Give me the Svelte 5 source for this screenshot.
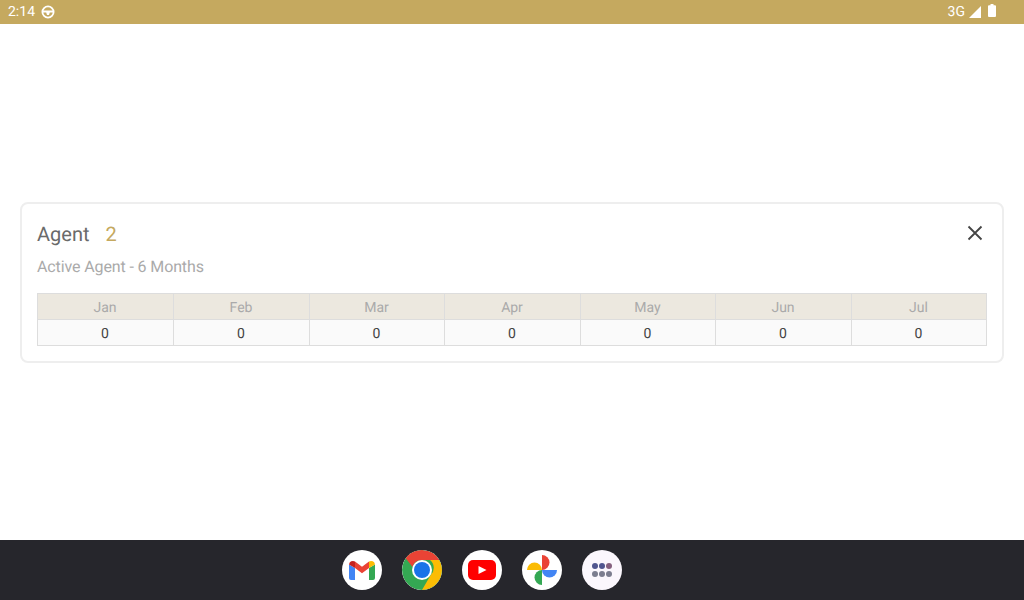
<script>
  const months = ['Jan', 'Feb', 'Mar', 'Apr', 'May', 'Jun', 'Jul'];
</script>

<div class="screen">
  <header class="status">
    <div class="left">
      <span>2:14</span>
      <svg width="14" height="14" viewBox="0 0 14 14">
        <circle cx="7" cy="7" r="5.6" fill="none" stroke="#fff" stroke-width="1.800" />
        <path d="M2 5.500h10v2H8.800L8 10H6L5.200 7.500H2z" fill="#fff" />
      </svg>
    </div>
    <div class="right">
      <span>3G</span>
      <svg width="12" height="12" viewBox="0 0 12 12"><path d="M12 0v12H0z" fill="#fff" /></svg>
      <svg class="batt" width="8" height="13" viewBox="0 0 8 13"><path d="M2.500 0h3v1.200H7a1 1 0 0 1 1 1V12a1 1 0 0 1-1 1H1a1 1 0 0 1-1-1V2.200a1 1 0 0 1 1-1h1.500z" fill="#fff" /></svg>
    </div>
  </header>

  <main class="main">
    <section class="card">
      <div class="head">
        <h1>Agent<span class="count">2</span></h1>
        <button class="close" aria-label="Close">
          <svg width="16" height="16" viewBox="0 0 16 16"><path d="M1.500 1.500l13 13M14.500 1.500l-13 13" stroke="#444" stroke-width="1.800" fill="none" /></svg>
        </button>
      </div>
      <p class="sub">Active Agent - 6 Months</p>
      <div class="table">
        {#each months as m}
          <div class="th">{m}</div>
        {/each}
        {#each months as m}
          <div class="td">0</div>
        {/each}
      </div>
    </section>
  </main>

  <nav class="dock">
    <div class="app">
      <svg width="28" height="22" viewBox="0 0 28 22">
        <path d="M1 5.500V19a2 2 0 0 0 2 2h4V9z" fill="#4285f4" />
        <path d="M21 9v12h4a2 2 0 0 0 2-2V5.500z" fill="#34a853" />
        <path d="M7 9l7 5.300L21 9V2.500l-7 5.300-7-5.300z" fill="#ea4335" />
        <path d="M1 5.500a4 4 0 0 1 6-3V9L1 5.500z" fill="#c5221f" />
        <path d="M21 2.500a4 4 0 0 1 6 3L21 9z" fill="#fbbc04" />
      </svg>
    </div>
    <div class="app">
      <svg width="40" height="40" viewBox="0 0 40 40">
        <circle cx="20" cy="20" r="20" fill="#34a853" />
        <path d="M20 0a20 20 0 0 1 17.320 10H20a10 10 0 0 0-9.500 7L3.500 8A20 20 0 0 1 20 0z" fill="#ea4335" />
        <path d="M37.320 10A20 20 0 0 1 20 40l8.700-15a10 10 0 0 0-.7-15z" fill="#fbbc04" />
        <circle cx="20" cy="20" r="10" fill="#fff" />
        <circle cx="20" cy="20" r="8" fill="#1a73e8" />
      </svg>
    </div>
    <div class="app">
      <svg width="28" height="20" viewBox="0 0 28 20">
        <rect width="28" height="20" rx="5" fill="#f00" />
        <path d="M10.500 6v8l8-4z" fill="#fff" />
      </svg>
    </div>
    <div class="app">
      <svg width="30" height="30" viewBox="0 0 30 30">
        <path d="M15 15V0a7.500 7.500 0 0 1 0 15z" fill="#ea4335" />
        <path d="M15 15h15a7.500 7.500 0 0 1-15 0z" fill="#4285f4" />
        <path d="M15 15v15a7.500 7.500 0 0 1 0-15z" fill="#34a853" />
        <path d="M15 15H0a7.500 7.500 0 0 1 15 0z" fill="#fbbc04" />
      </svg>
    </div>
    <div class="app apps">
      <div class="dots">
        <i class="a"></i><i class="a"></i><i class="b"></i>
        <i class="c"></i><i class="c"></i><i class="c"></i>
      </div>
    </div>
  </nav>
</div>

<style>
  :global(body) {
    margin: 0;
    font-family: Roboto, "Liberation Sans", sans-serif;
    text-rendering: geometricPrecision;
  }
  .screen {
    width: 1024px;
    height: 600px;
    display: flex;
    flex-direction: column;
    background: #fff;
    overflow: hidden;
  }
  .status {
    height: 24px;
    flex: none;
    background: #c5a95f;
    color: #fff;
    font-size: 14px;
    display: flex;
    align-items: center;
    justify-content: space-between;
    padding: 0 28px 0 8px;
  }
  .left, .right {
    display: flex;
    align-items: center;
  }
  .left { gap: 6px; }
  .right { gap: 4px; }
  .batt { margin-left: 3px; margin-top: -3px; }
  .main {
    flex: 1;
    display: flex;
    align-items: center;
    justify-content: center;
    padding-top: 1px;
  }
  .card {
    box-sizing: border-box;
    width: 984px;
    height: 161px;
    border: 2px solid #eee;
    border-radius: 8px;
    padding: 16px 15px;
  }
  .head {
    display: flex;
    justify-content: space-between;
    align-items: center;
    height: 28px;
  }
  h1 {
    margin: 0;
    font-size: 20px;
    font-weight: 400;
    color: #6a6a6a;
  }
  .count {
    color: #c5a95f;
    margin-left: 16px;
  }
  .close {
    border: 0;
    background: none;
    padding: 0;
    margin: -2px 4px 0 0;
    display: flex;
  }
  .sub {
    margin: 7px 0 0;
    font-size: 16px;
    line-height: 24px;
    letter-spacing: -0.12px;
    color: #aaa;
  }
  .table {
    margin-top: 14px;
    display: grid;
    grid-template-columns: 136px 136px 135px 136px 135px 136px 135px;
    border: 1px solid #ddd;
    border-right: 0;
    border-bottom: 0;
  }
  .th, .td {
    box-sizing: border-box;
    height: 26px;
    padding: 2px 1px 0 0;
    display: flex;
    align-items: center;
    justify-content: center;
    font-size: 14px;
    border-right: 1px solid #ddd;
    border-bottom: 1px solid #ddd;
  }
  .th {
    background: #ece8df;
    color: #aaa;
  }
  .td {
    background: #fafafa;
    color: #444;
  }
  .dock {
    height: 60px;
    flex: none;
    background: #26262c;
    display: flex;
    justify-content: center;
    align-items: center;
    gap: 20px;
    padding-right: 60px;
  }
  .app {
    width: 40px;
    height: 40px;
    border-radius: 50%;
    background: #fff;
    display: flex;
    align-items: center;
    justify-content: center;
    overflow: hidden;
  }
  .apps { background: #fbf7fd; }
  .dots {
    display: grid;
    grid-template-columns: repeat(3, 5px);
    gap: 2.500px 2px;
  }
  .dots i {
    width: 6px;
    height: 6px;
    border-radius: 50%;
    margin-left: -.5px;
  }
  .a { background: #50558f; }
  .b { background: #85607f; }
  .c { background: #7c7d8f; }
</style>
